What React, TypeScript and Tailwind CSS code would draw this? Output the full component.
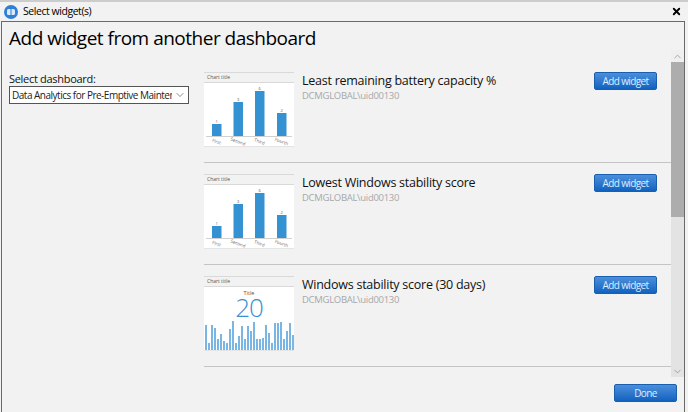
import { X, ChevronDown, ChevronUp } from 'lucide-react'

const widgets = [
  { name: 'Least remaining battery capacity %', kind: 'bars', values: [12, 34, 45, 23], top: ['1', '3', '6', '2'] },
  { name: 'Lowest Windows stability score', kind: 'bars', values: [12, 34, 45, 23], top: ['1', '3', '6', '2'] },
  { name: 'Windows stability score (30 days)', kind: 'trend' },
]

const trend = [25, 7, 25, 22, 11, 16, 9, 7, 21, 29, 7, 14, 24, 11, 24, 19, 28, 11, 11, 12, 25, 17, 7, 27, 27, 28, 11, 19, 27, 15]

function BarChart({ values, top }: { values: number[]; top: string[] }) {
  const xs = [8, 29.5, 51, 73]
  const labels = ['First', 'Second', 'Third', 'Fourth']
  return (
    <svg width="90" height="63" viewBox="0 0 90 63" className="block">
      <line x1="2" y1="53.5" x2="88" y2="53.5" stroke="#d0d0d0" />
      {values.map((v, i) => (
        <g key={i}>
          <rect x={xs[i]} y={53 - v} width="9.5" height={v} fill="#3492d3" />
          <text x={xs[i] + 4.7} y={52 - v} fontSize="4" textAnchor="middle" fill="#555">{top[i]}</text>
          <text x={xs[i] + 4} y="60" fontSize="4.5" textAnchor="middle" fill="#666" transform={`rotate(20 ${xs[i] + 4} 60)`}>{labels[i]}</text>
        </g>
      ))}
    </svg>
  )
}

function TrendChart() {
  return (
    <svg width="90" height="63" viewBox="0 0 90 63" className="block">
      <text x="45" y="7.5" fontSize="5.5" textAnchor="middle" fill="#555">Title</text>
      <text x="45" y="30" fontSize="26" fontWeight="300" letterSpacing="-1" textAnchor="middle" fill="#3492d3">20</text>
      {trend.map((h, i) => (
        <rect key={i} x={1.2 + i * 3} y={63 - h} width="1.6" height={h} fill="#5aa5dc" />
      ))}
    </svg>
  )
}

function Thumb({ w }: { w: (typeof widgets)[number] }) {
  return (
    <div className="w-[90px] shrink-0">
      <div className="h-[11px] border-y border-[#d9d9d9] pl-[3px] text-[5px] leading-[9px] text-[#555]">Chart title</div>
      <div className="bg-white border-b border-[#e4e4e4]">
        {w.kind === 'bars' ? <BarChart values={w.values!} top={w.top!} /> : <TrendChart />}
      </div>
    </div>
  )
}

function AddButton({ label }: { label: string }) {
  return (
    <button className="h-[18px] w-[63px] rounded-[2px] border border-[#1a5fae] bg-gradient-to-b from-[#4a8fdc] to-[#0f62bf] text-[10px] tracking-[-0.6px] leading-[14px] text-[#dcedff]">
      {label}
    </button>
  )
}

export default function App() {
  return (
    <div className="w-[688px] h-[412px] overflow-hidden flex flex-col bg-[#f2f2f2] border-t-2 border-[#cccccc] text-black" style={{ fontFamily: '"Open Sans", sans-serif' }}>
      <div className="h-[19px] shrink-0 flex items-center pl-[4px] pr-[5px]">
        <svg width="14" height="14" viewBox="0 0 14 14">
          <circle cx="7" cy="7" r="7" fill="#2f7fd6" />
          <rect x="3" y="4" width="8" height="6" rx="1.5" fill="#dbe9f8" />
          <line x1="7" y1="4" x2="7" y2="10" stroke="#2f7fd6" strokeWidth="1" />
        </svg>
        <span className="ml-[5px] text-[10.5px] tracking-[-0.45px] leading-none">Select widget(s)</span>
        <X className="ml-auto mr-[1px] text-black" size={11} strokeWidth={4} />
      </div>

      <div className="flex-1 min-h-0 ml-[1px] mr-[3px] border-x border-t border-[#6a6a6a] flex flex-col">
        <h1 className="h-[28px] shrink-0 pl-[7px] pt-[2px] text-[19px] tracking-[-0.5px] leading-[28px] font-normal">Add widget from another dashboard</h1>

        <div className="flex h-[327px] shrink-0">
          <div className="w-[202px] shrink-0 pl-[7px] pt-[22px]">
            <div className="text-[11px] tracking-[-0.3px] leading-[14px] text-[#111]">Select dashboard:</div>
            <div className="w-[180px] h-[18px] border border-[#555] bg-white flex items-center px-[2px]">
              <span className="flex-1 overflow-hidden whitespace-nowrap text-[10px] tracking-[-0.5px] leading-[16px] text-[#222]">Data Analytics for Pre-Emptive Maintenance</span>
              <ChevronDown size={12} strokeWidth={1.25} className="ml-[2px] shrink-0 text-[#444]" />
            </div>
          </div>

          <div className="flex-1 overflow-hidden">
            {widgets.map((w) => (
              <div key={w.name} className="h-[102px] first:h-[113px] first:pt-[22px] not-first:pt-[11px] border-b border-[#c4c4c4] flex pr-[14px]">
                <Thumb w={w} />
                <div className="ml-[8px] flex-1">
                  <div className="text-[12.5px] tracking-[-0.25px] leading-[17px] text-[#111]">{w.name}</div>
                  <div className="text-[9.5px] tracking-[-0.3px] leading-[13px] text-[#a8a8a8]">DCMGLOBAL\uid00130</div>
                </div>
                <AddButton label="Add widget" />
              </div>
            ))}
          </div>

          <div className="w-[13px] shrink-0 flex flex-col bg-[#e3e3e3]">
            <div className="h-[12px] flex items-center justify-center bg-[#efefef]">
              <ChevronUp size={11} strokeWidth={1.5} className="text-[#888]" />
            </div>
            <div className="h-[155px] bg-[#adadad]" />
            <div className="flex-1" />
            <div className="h-[12px] flex items-center justify-center">
              <ChevronDown size={11} strokeWidth={1.5} className="text-[#888]" />
            </div>
          </div>
        </div>

        <div className="flex justify-end pt-[7px] pr-[7px]">
          <AddButton label="Done" />
        </div>
      </div>
    </div>
  )
}
